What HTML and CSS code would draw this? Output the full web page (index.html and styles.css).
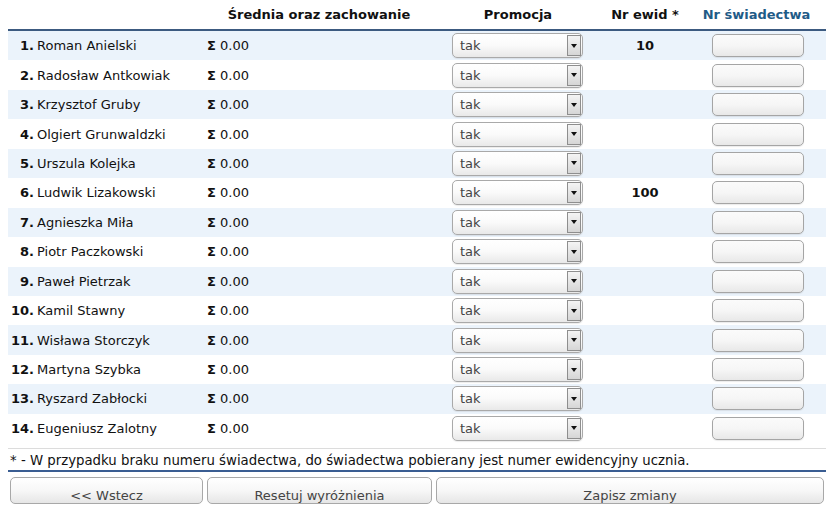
FILE: index.html
```html
<!DOCTYPE html>
<html lang="pl">
<head>
<meta charset="utf-8">
<link rel="stylesheet" href="styles.css">
</head>
<body>
<div class="page">
<table class="grid">
  <colgroup>
    <col class="c-num"><col class="c-name"><col class="c-avg"><col class="c-promo"><col class="c-ewid"><col class="c-sw">
  </colgroup>
  <thead>
    <tr>
      <th></th><th></th>
      <th>Średnia oraz zachowanie</th>
      <th>Promocja</th>
      <th>Nr ewid *</th>
      <th class="accent">Nr świadectwa</th>
    </tr>
  </thead>
  <tbody>
    <tr><td class="num">1.</td><td>Roman Anielski</td><td><b>Σ</b> 0.00</td><td><div class="sel"><span>tak</span><i class="arr"></i></div></td><td class="ewid">10</td><td><div class="inp"></div></td></tr>
    <tr><td class="num">2.</td><td>Radosław Antkowiak</td><td><b>Σ</b> 0.00</td><td><div class="sel"><span>tak</span><i class="arr"></i></div></td><td class="ewid"></td><td><div class="inp"></div></td></tr>
    <tr><td class="num">3.</td><td>Krzysztof Gruby</td><td><b>Σ</b> 0.00</td><td><div class="sel"><span>tak</span><i class="arr"></i></div></td><td class="ewid"></td><td><div class="inp"></div></td></tr>
    <tr><td class="num">4.</td><td>Olgiert Grunwaldzki</td><td><b>Σ</b> 0.00</td><td><div class="sel"><span>tak</span><i class="arr"></i></div></td><td class="ewid"></td><td><div class="inp"></div></td></tr>
    <tr><td class="num">5.</td><td>Urszula Kolejka</td><td><b>Σ</b> 0.00</td><td><div class="sel"><span>tak</span><i class="arr"></i></div></td><td class="ewid"></td><td><div class="inp"></div></td></tr>
    <tr><td class="num">6.</td><td>Ludwik Lizakowski</td><td><b>Σ</b> 0.00</td><td><div class="sel"><span>tak</span><i class="arr"></i></div></td><td class="ewid">100</td><td><div class="inp"></div></td></tr>
    <tr><td class="num">7.</td><td>Agnieszka Miła</td><td><b>Σ</b> 0.00</td><td><div class="sel"><span>tak</span><i class="arr"></i></div></td><td class="ewid"></td><td><div class="inp"></div></td></tr>
    <tr><td class="num">8.</td><td>Piotr Paczkowski</td><td><b>Σ</b> 0.00</td><td><div class="sel"><span>tak</span><i class="arr"></i></div></td><td class="ewid"></td><td><div class="inp"></div></td></tr>
    <tr><td class="num">9.</td><td>Paweł Pietrzak</td><td><b>Σ</b> 0.00</td><td><div class="sel"><span>tak</span><i class="arr"></i></div></td><td class="ewid"></td><td><div class="inp"></div></td></tr>
    <tr><td class="num">10.</td><td>Kamil Stawny</td><td><b>Σ</b> 0.00</td><td><div class="sel"><span>tak</span><i class="arr"></i></div></td><td class="ewid"></td><td><div class="inp"></div></td></tr>
    <tr><td class="num">11.</td><td>Wisława Storczyk</td><td><b>Σ</b> 0.00</td><td><div class="sel"><span>tak</span><i class="arr"></i></div></td><td class="ewid"></td><td><div class="inp"></div></td></tr>
    <tr><td class="num">12.</td><td>Martyna Szybka</td><td><b>Σ</b> 0.00</td><td><div class="sel"><span>tak</span><i class="arr"></i></div></td><td class="ewid"></td><td><div class="inp"></div></td></tr>
    <tr><td class="num">13.</td><td>Ryszard Zabłocki</td><td><b>Σ</b> 0.00</td><td><div class="sel"><span>tak</span><i class="arr"></i></div></td><td class="ewid"></td><td><div class="inp"></div></td></tr>
    <tr><td class="num">14.</td><td>Eugeniusz Zalotny</td><td><b>Σ</b> 0.00</td><td><div class="sel"><span>tak</span><i class="arr"></i></div></td><td class="ewid"></td><td><div class="inp"></div></td></tr>
  </tbody>
</table>
<div class="note">* - W przypadku braku numeru świadectwa, do świadectwa pobierany jest numer ewidencyjny ucznia.</div>
<div class="buttons">
  <div class="btn b-back">&lt;&lt; Wstecz</div>
  <div class="btn b-reset">Resetuj wyróżnienia</div>
  <div class="btn b-save">Zapisz zmiany</div>
</div>
</div>
</body>
</html>
```
FILE: styles.css
```css
html, body {
  margin: 0;
  padding: 0;
  background: #fff;
}
body {
  font-family: "DejaVu Sans", Verdana, sans-serif;
  font-size: 13px;
  color: #111;
}
.page {
  padding: 0 9px 0 8px;
}
.grid {
  width: 818px;
  border-collapse: collapse;
  table-layout: fixed;
}
.c-num { width: 26px; }
.c-name { width: 171px; }
.c-avg { width: 228px; }
.c-promo { width: 170px; }
.c-ewid { width: 84px; }
.c-sw { width: 139px; }
.grid th {
  height: 30px;
  padding: 0;
  font-weight: bold;
  text-align: center;
  vertical-align: middle;
  border-bottom: 2px solid #3c5a80;
  box-sizing: border-box;
}
.grid th.accent { color: #1f5b87; }
.grid td {
  height: 29.45px;
  padding: 0;
  vertical-align: middle;
  white-space: nowrap;
}
.grid tbody tr:nth-child(odd) td { background: #ebf3fb; }
.grid td:nth-child(2) { padding-left: 3px; }
.grid td:nth-child(3) { padding-left: 2px; }
.grid td.num {
  text-align: right;
  font-weight: bold;
}
.grid td.ewid {
  text-align: center;
  font-weight: bold;
}
.sel {
  margin-left: 19px;
  width: 131px;
  height: 25px;
  box-sizing: border-box;
  border: 1px solid #a9a9a9;
  border-radius: 5px;
  background: linear-gradient(#ffffff, #fafafa 50%, #e9e9e9);
  display: flex;
  align-items: center;
  justify-content: space-between;
  color: #444;
  box-shadow: 0 1px 1px rgba(0,0,0,0.08);
}
.sel span { padding-left: 7px; }
.arr {
  width: 14px;
  height: 21px;
  margin-right: 1px;
  box-sizing: border-box;
  border: 1px solid #8e8e8e;
  background: linear-gradient(#f4f4f4, #d6d6d6);
  display: flex;
  align-items: center;
  justify-content: center;
}
.arr::after {
  content: "";
  border-left: 3.5px solid transparent;
  border-right: 3.5px solid transparent;
  border-top: 4px solid #111;
}
.inp {
  margin-left: 25px;
  width: 92px;
  height: 23px;
  box-sizing: border-box;
  border: 1px solid #a5a5a5;
  border-radius: 5px;
  background: linear-gradient(#fbfbfb, #f6f6f6 50%, #e8e8e8);
  box-shadow: 0 1px 1px rgba(0,0,0,0.08);
}
.note {
  width: 818px;
  margin-top: 5px;
  padding: 4px 0 2px 2px;
  box-sizing: border-box;
  border-top: 1px solid #dcdcdc;
  border-bottom: 2px solid #3a5d92;
  font-size: 13.3px;
  color: #111;
}
.buttons {
  display: flex;
  gap: 4px;
  margin-top: 5px;
  padding-left: 2px;
  width: 818px;
  box-sizing: border-box;
}
.btn {
  height: 27px;
  box-sizing: border-box;
  border: 1px solid #a8a8a8;
  border-radius: 5px;
  background: linear-gradient(#ffffff, #f7f7f7 50%, #e6e6e6);
  color: #444;
  font-size: 13px;
  text-align: center;
  padding-top: 9px;
  line-height: 17px;
}
.b-back { width: 193px; }
.b-reset { width: 225px; }
.b-save { width: 388px; }
```
